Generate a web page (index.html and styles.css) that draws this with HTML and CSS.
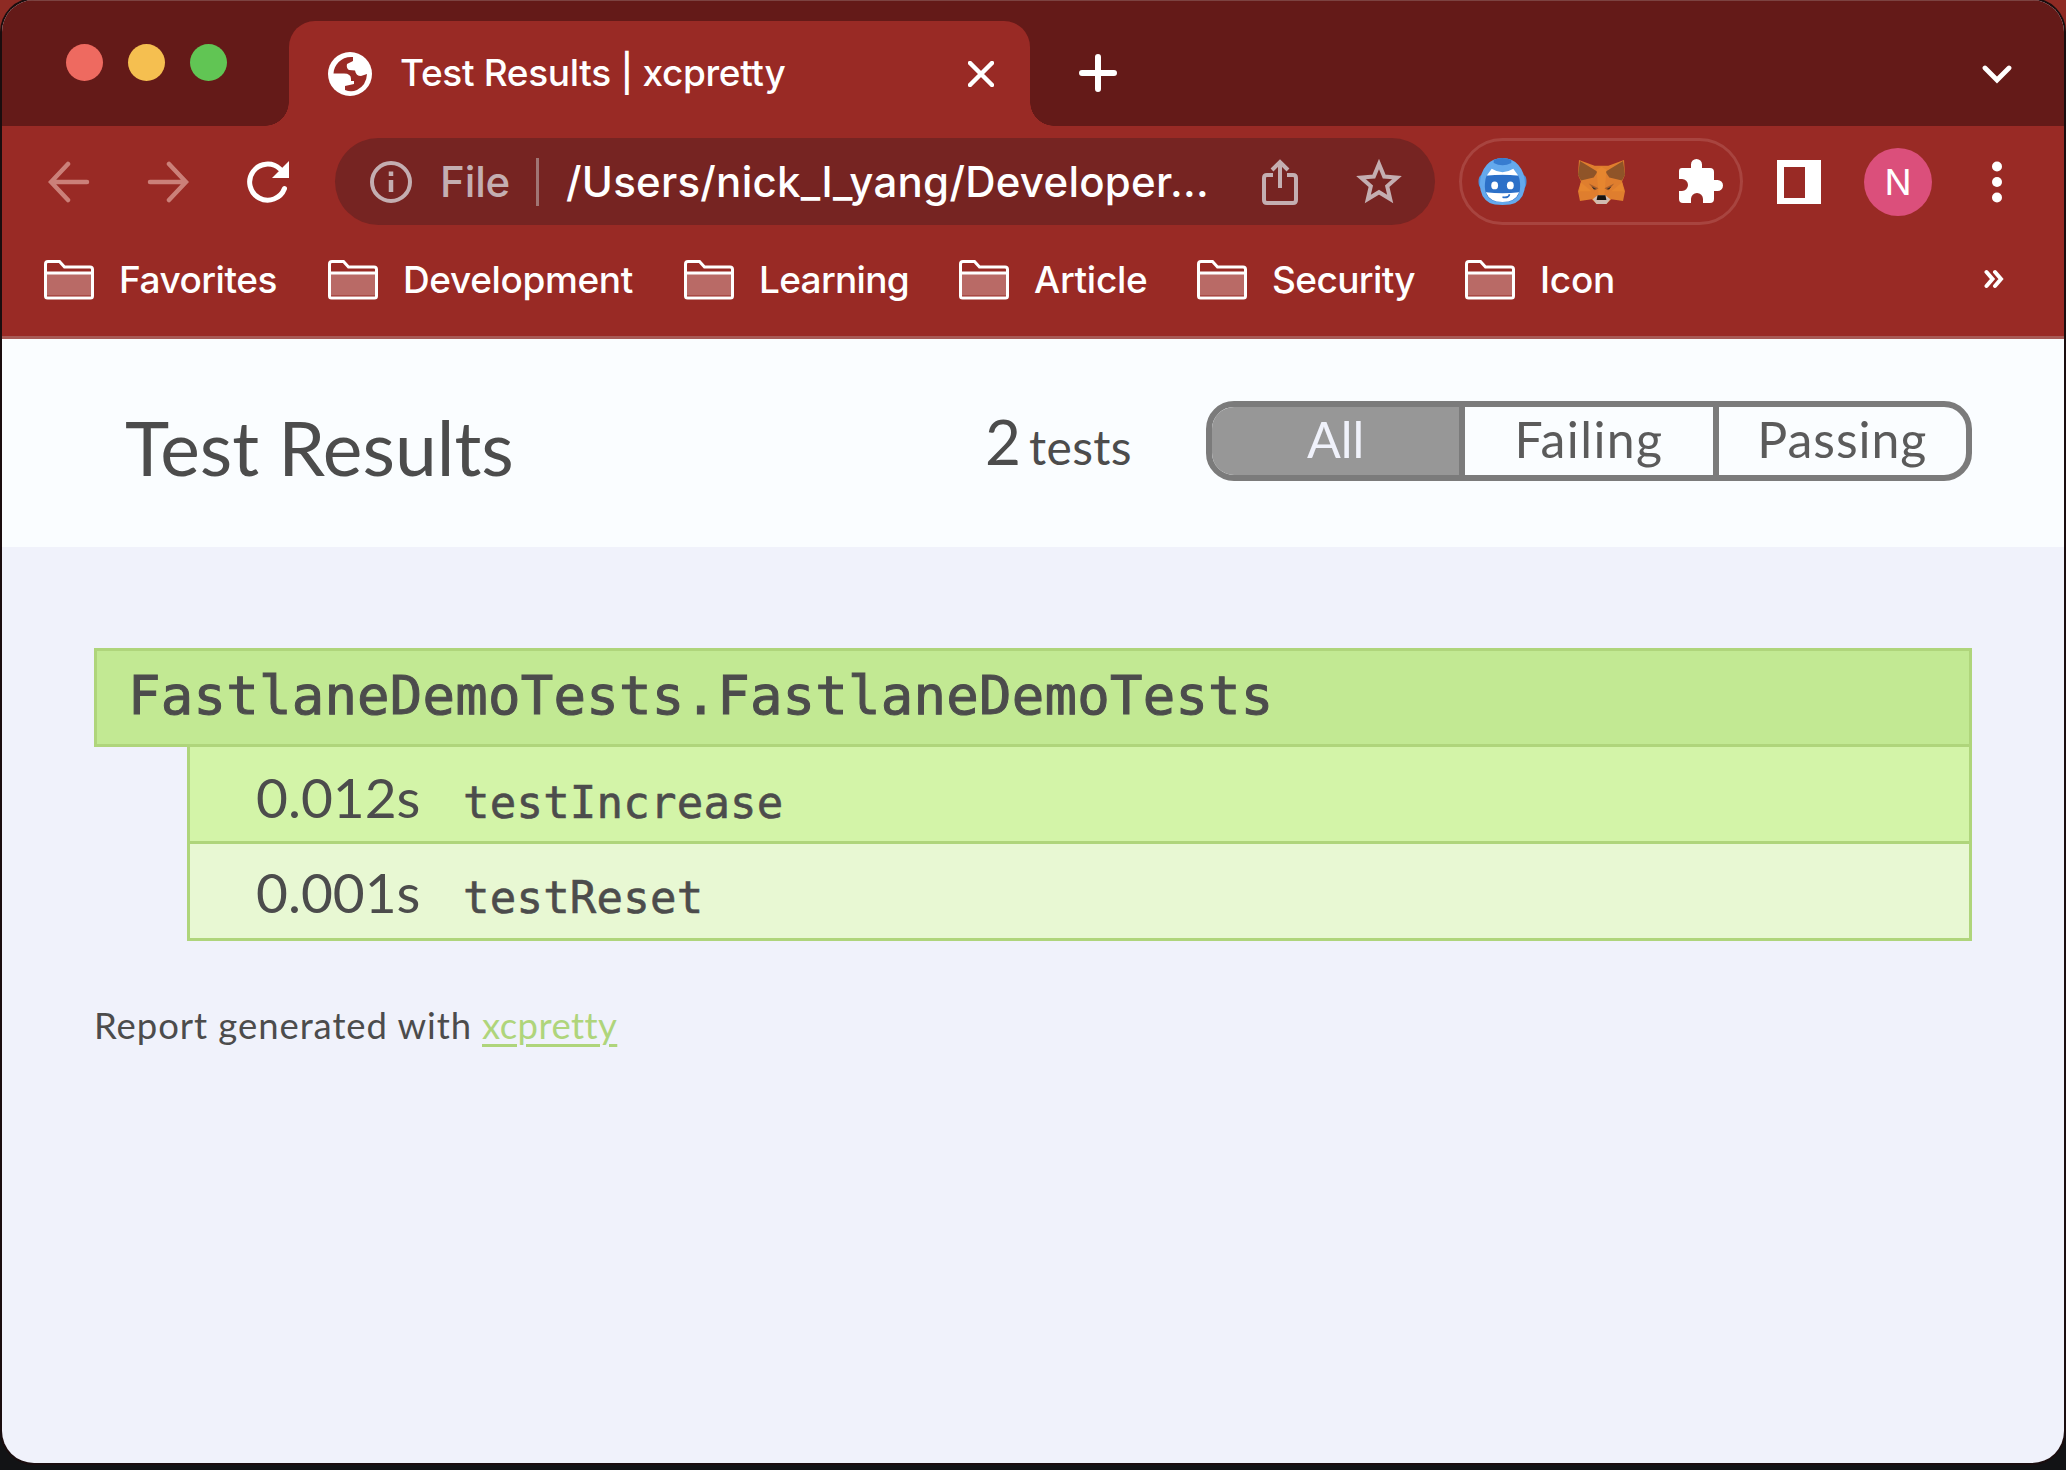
FILE: index.html
```html
<!DOCTYPE html>
<html lang="en">
<head>
<meta charset="utf-8">
<title>Test Results | xcpretty</title>
<link rel="stylesheet" href="styles.css">
</head>
<body>
<svg width="0" height="0" class="defs">
  <symbol id="folder" viewBox="0 0 50 40">
    <path d="M2.500 14H47.500V35.500H2.500Z" fill="#b96a66"/>
    <path d="M1.500 4Q1.500 1.500 4 1.500H15.500L20.500 7H46Q48.500 7 48.500 9.500V36Q48.500 38 46.500 38H3.500Q1.500 38 1.500 36ZM2 13H48" fill="none" stroke="#fff" stroke-width="3"/>
  </symbol>
</svg>
<div class="window">
  <div class="tabstrip">
    <div class="lights"><i class="red"></i><i class="yellow"></i><i class="green"></i></div>
    <div class="tab">
      <svg class="globe" viewBox="0 0 44 44"><circle cx="22" cy="22" r="22" fill="#fff"/><path d="M25 5C14 4 6 12 5.500 21.500H16Q23 21.500 23 27V29H26V32L17 34V38Q23 40.500 29 38Q38.500 33 39 22L33 24Q28 24 27 18.500L21 18Q18 16 19 12L25 9Z" fill="#992a25"/></svg>
      <span class="tab-title">Test Results | xcpretty</span>
      <svg class="close" viewBox="0 0 26 26"><path d="M2 2L24 24M24 2L2 24" stroke="#fff" stroke-width="4.500" stroke-linecap="round"/></svg>
    </div>
    <svg class="plus" viewBox="0 0 38 38"><path d="M19 3V35M3 19H35" stroke="#fff" stroke-width="6" stroke-linecap="round"/></svg>
    <svg class="chevron" viewBox="0 0 30 20"><path d="M3 3L15 15L27 3" fill="none" stroke="#fff" stroke-width="4.800" stroke-linecap="round"/></svg>
  </div>
  <div class="toolbar">
    <svg class="arrow" viewBox="0 0 42 42"><path d="M39 21H4M20 3L3 21L20 39" fill="none" stroke="#cb8079" stroke-width="4.500" stroke-linecap="round"/></svg>
    <svg class="arrow forward" viewBox="0 0 42 42"><path d="M3 21H38M22 3L39 21L22 39" fill="none" stroke="#cb8079" stroke-width="4.500" stroke-linecap="round"/></svg>
    <svg class="reload" viewBox="0 0 44 44"><path d="M38.500 28.500A18 18 0 1 1 34 9" fill="none" stroke="#fff" stroke-width="5" stroke-linecap="round"/><path d="M43 1V18H26Z" fill="#fff"/></svg>
    <div class="omnibox">
      <svg class="info" viewBox="0 0 42 42"><circle cx="21" cy="21" r="19" fill="none" stroke="#c4aeb1" stroke-width="4"/><path d="M21 19V31M21 10.500V15" stroke="#c4aeb1" stroke-width="4.500"/></svg>
      <span class="scheme">File</span>
      <i class="divider"></i>
      <span class="url">/Users/nick_l_yang/Developer...</span>
      <svg class="share" viewBox="0 0 36 46"><path d="M11 16H5Q2 16 2 19V41Q2 44 5 44H31Q34 44 34 41V19Q34 16 31 16H25M18 29V4M10 11L18 3L26 11" fill="none" stroke="#c4aeb1" stroke-width="4"/></svg>
      <svg class="star" viewBox="0 0 46 44"><path d="M23 5L28.200 17.500L41 18.600L31.200 27.200L34.200 40L23 33.200L11.800 40L14.800 27.200L5 18.600L17.800 17.500Z" fill="none" stroke="#c4aeb1" stroke-width="4"/></svg>
    </div>
    <div class="extensions">
      <svg class="robot" viewBox="0 0 50 50"><path d="M4 18Q0.500 19 0.500 25Q0.500 31 4 33ZM46 18Q49.500 19 49.500 25Q49.500 31 46 33Z" fill="#4a90dc"/><path d="M25 1Q35 1 41 8Q48 16 48 28Q48 41 38 47Q34 49 25 49Q16 49 12 47Q2 41 2 28Q2 16 9 8Q15 1 25 1Z" fill="#64a9ed"/><path d="M16 3Q25 -1 34 3L34 6Q25 11 16 6Z" fill="#377cd0"/><path d="M9 19Q25 17 41 19Q43 23 43 30Q43 46 25 46Q7 46 7 30Q7 23 9 19Z" fill="#2c70c8"/><path d="M14 12Q25 19 36 12L41 19Q25 17 9 19Z" fill="#fff"/><path d="M8 36Q25 38 42 36Q38 46 25 46Q12 46 8 36Z" fill="#fff"/><path d="M25 41Q32 42 32 38" fill="none" stroke="#2c70c8" stroke-width="1.800"/><ellipse cx="17" cy="29" rx="3.500" ry="4" fill="#fff"/><ellipse cx="33" cy="29" rx="3.500" ry="4" fill="#fff"/></svg>
      <svg class="fox" viewBox="0 0 50 48"><path d="M2 2L18 8H32L48 2L49 17L46 24L49 34L47 44L35 42L30 47H20L15 42L3 44L1 34L4 24L1 17Z" fill="#df7e2e"/><path d="M3 3L21 14L17 20L4 23L1 17ZM47 3L29 14L33 20L46 23L49 17Z" fill="#8f5428"/><path d="M20 12L25 9L30 12L28 38H22ZM4 25L15 34L2 34ZM46 25L35 34L48 34Z" fill="#e6862f"/><path d="M12 26L22 31L18 33ZM38 26L28 31L32 33Z" fill="#a75e2b"/><path d="M15 29L20 32L17 32ZM35 29L30 32L33 32Z" fill="#332c28"/><path d="M16 42L21 38H29L34 42L30 47H20Z" fill="#d1bbb0"/><path d="M21 38H29L30 43H20Z" fill="#17130f"/></svg>
      <svg class="puzzle" viewBox="0 0 46 46"><path d="M4 10H13V6.500A5.500 5.500 0 0 1 24 6.500V10H32Q36 10 36 14V22H39.500A5 5 0 0 1 39.500 33H36V41Q36 45 32 45H25V41A6 6 0 0 0 13 41V45H5Q1 45 1 41V33H4A6 6 0 0 0 4 21H1V13Q1 10 4 10Z" fill="#fff"/></svg>
    </div>
    <svg class="panel" viewBox="0 0 44 44"><path d="M0 0H44V44H0ZM7 7V38H28V7Z" fill="#fff" fill-rule="evenodd"/></svg>
    <span class="avatar">N</span>
    <svg class="dots" viewBox="0 0 10 42"><circle cx="5" cy="5.500" r="5" fill="#fff"/><circle cx="5" cy="21" r="5" fill="#fff"/><circle cx="5" cy="36.500" r="5" fill="#fff"/></svg>
  </div>
  <div class="bookmarks">
    <span class="bm bm1"><svg><use href="#folder"/></svg><b>Favorites</b></span>
    <span class="bm bm2"><svg><use href="#folder"/></svg><b>Development</b></span>
    <span class="bm bm3"><svg><use href="#folder"/></svg><b>Learning</b></span>
    <span class="bm bm4"><svg><use href="#folder"/></svg><b>Article</b></span>
    <span class="bm bm5"><svg><use href="#folder"/></svg><b>Security</b></span>
    <span class="bm bm6"><svg><use href="#folder"/></svg><b>Icon</b></span>
    <svg class="more" viewBox="0 0 20 20"><path d="M2.500 3L8.500 10L2.500 17M11 3L17 10L11 17" fill="none" stroke="#fff" stroke-width="4" stroke-linecap="round"/></svg>
  </div>
  <header class="report-head">
    <h1>Test Results</h1>
    <div class="count"><span class="number">2</span><span class="label">tests</span></div>
    <div class="segments">
      <span class="active">All</span><span class="failing">Failing</span><span class="passing">Passing</span>
    </div>
  </header>
  <main>
    <h2>FastlaneDemoTests.FastlaneDemoTests</h2>
    <div class="tests">
      <div class="row"><span class="time">0.012s</span><span class="name">testIncrease</span></div>
      <div class="row odd"><span class="time">0.001s</span><span class="name">testReset</span></div>
    </div>
    <footer><span>Report generated with</span><a>xcpretty</a></footer>
  </main>
</div>
</body>
</html>
```
FILE: styles.css
```css
* { box-sizing: border-box; margin: 0; padding: 0; }
body { width: 2066px; height: 1470px; overflow: hidden; background: linear-gradient(#8e2a23 0 36px, #121315 36px); padding: 0 2px; font-family: Inter, "Liberation Sans", sans-serif; }
svg { display: block; flex: none; }
.defs { position: absolute; }
span, b, h1, h2, a { white-space: nowrap; }
.window { height: 1463px; border-radius: 32px; overflow: hidden; background: #f0f2fb; box-shadow: 0 0 0 2px #1a0d0e; }
.tabstrip { height: 126px; background: #641a18; display: flex; border-top: 1px solid #7c4341; }
.lights { width: 287px; padding: 43px 0 0 64px; display: flex; gap: 26.500px; }
.lights i { width: 37px; height: 37px; margin-right: -1.500px; border-radius: 50%; }
.red { background: #ee6a60; }
.yellow { background: #f5bf50; }
.green { background: #61c554; }
.tab { position: relative; width: 741px; height: 105px; margin-top: 20px; background: #992a25; border-radius: 26px 26px 0 0; display: flex; align-items: center; padding-left: 39px; }
.tab::before, .tab::after { content: ""; position: absolute; bottom: 0; width: 24px; height: 24px; }
.tab::before { right: 100%; background: radial-gradient(circle at 0 0, transparent 23.500px, #992a25 24px); }
.tab::after { left: 100%; background: radial-gradient(circle at 100% 0, transparent 23.500px, #992a25 24px); }
.globe { width: 44px; height: 44px; }
.tab-title { margin-left: 28px; width: 568px; font-size: 37px; font-weight: 500; letter-spacing: -0.330px; color: #fff; line-height: 60px; padding-bottom: 2px; }
.close { width: 26px; height: 26px; }
.plus { width: 38px; height: 38px; margin: 53px 0 0 49px; }
.chevron { width: 30px; height: 20px; margin: 64px 0 0 865px; }
.toolbar { height: 111px; background: #992a25; display: flex; align-items: center; }
.arrow { width: 42px; height: 42px; margin-left: 46px; }
.forward { margin-left: 57px; }
.reload { width: 44px; height: 44px; margin-left: 57px; }
.omnibox { width: 1100px; height: 87px; margin-left: 45px; border-radius: 44px; background: #762422; display: flex; align-items: center; }
.info { width: 42px; height: 42px; margin-left: 35px; }
.scheme { margin-left: 28px; width: 96px; font-size: 42px; font-weight: 500; letter-spacing: -0.100px; color: #c4aeb1; }
.divider { width: 3px; height: 48px; background: #a07574; margin-right: 27px; }
.url { width: 696px; font-size: 42px; font-weight: 500; letter-spacing: 0.260px; color: #fff; }
.share { width: 36px; height: 46px; }
.star { width: 46px; height: 46px; margin-left: 58px; margin-top: -2px; }
.extensions { width: 284px; height: 87px; margin-left: 24px; border: 3px solid #a8443f; border-radius: 44px; display: flex; align-items: center; padding-left: 16px; }
.robot { width: 49px; height: 49px; }
.fox { width: 49px; height: 47px; margin-left: 50px; }
.puzzle { width: 46px; height: 46px; margin-left: 52px; margin-top: -2px; }
.panel { width: 44px; height: 44px; margin-left: 34px; }
.avatar { width: 68px; height: 68px; margin-left: 43px; border-radius: 50%; background: #db4f7b; color: #fff; font-size: 36px; line-height: 69px; text-align: center; }
.dots { width: 10px; height: 42px; margin-left: 60px; }
.bookmarks { height: 102px; background: #992a25; border-bottom: 3px solid #a85a56; display: flex; align-items: flex-start; padding: 23px 0 0 42px; }
.bm { display: flex; height: 40px; align-items: center; }
.bm svg { width: 50px; height: 40px; margin-right: 25px; }
.bm b { font-size: 37px; font-weight: 500; color: #fff; line-height: 40px; letter-spacing: -0.500px; }
.bm1 { width: 284px; }
.bm2 { width: 356px; }
.bm2 b { letter-spacing: -0.370px; }
.bm3 { width: 275px; }
.bm3 b { letter-spacing: -0.700px; }
.bm4 { width: 238px; }
.bm4 b { letter-spacing: -0.300px; }
.bm5 { width: 268px; }
.bm5 b { letter-spacing: -0.620px; }
.bm6 { width: 519px; }
.bm6 b { letter-spacing: -0.250px; }
.more { width: 20px; height: 20px; margin-top: 9px; }
.report-head { height: 208px; background: #fafdff; font-family: Lato, "Open Sans", sans-serif; color: #4c4c4c; display: flex; }
h1 { width: 860px; margin-left: 123px; padding-top: 58px; font-size: 75px; font-weight: 400; line-height: 100px; }
.count { width: 221px; display: flex; align-items: baseline; padding-top: 62px; line-height: 80px; }
.number { width: 44px; font-size: 62px; }
.label { font-size: 48px; letter-spacing: 0.360px; }
.segments { width: 766px; height: 80px; margin-top: 62px; border: 6px solid #7b7b7b; border-radius: 28px; display: flex; overflow: hidden; background: #fafdff; }
.segments span { flex: 1; text-align: center; font-size: 50px; line-height: 64px; border-left: 6px solid #7b7b7b; color: #5b5b5b; }
.segments .active { border-left: 0; background: #979797; color: #f0f2fb; }
.segments .failing { letter-spacing: 1.390px; }
.segments .passing { letter-spacing: 0.960px; }
main { padding: 101px 92px 0; color: #4c4c4c; font-family: Lato, "Open Sans", sans-serif; }
h2 { height: 99px; background: #c2e993; border: 3px solid #afd57b; padding-left: 31px; font-family: "DejaVu Sans Mono", monospace; font-size: 54px; font-weight: 400; line-height: 90px; letter-spacing: 0.220px; -webkit-text-stroke: 1px #4c4c4c; }
.tests { margin-left: 93px; border: 3px solid #afd57b; border-top: 0; }
.row { height: 94px; background: #d3f4a8; display: flex; align-items: baseline; padding: 7px 0 0 66px; line-height: 86px; }
.odd { height: 97px; background: #e8f8d3; border-top: 3px solid #afd57b; padding-top: 5px; }
.time { width: 207px; font-size: 55px; }
.name { font-family: "DejaVu Sans Mono", monospace; font-size: 44px; letter-spacing: 0.220px; -webkit-text-stroke: 0.600px #4c4c4c; }
footer { display: flex; padding-top: 54px; font-size: 36.500px; line-height: 60px; }
footer span { width: 388px; letter-spacing: 0.930px; }
a { color: #afd57b; letter-spacing: 0.420px; text-decoration: underline; text-decoration-thickness: 3px; text-underline-offset: 5px; }
```
